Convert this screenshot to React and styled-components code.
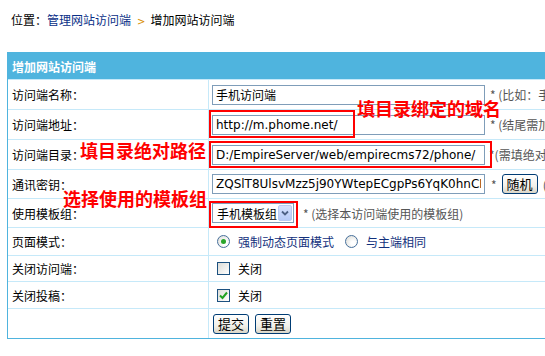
import React from 'react'
import styled, { createGlobalStyle } from 'styled-components'

const GlobalStyle = createGlobalStyle`
  html, body { margin: 0; padding: 0; background: #fff; overflow: hidden; }
  body {
    font-family: "Noto Sans CJK SC", "DejaVu Sans", sans-serif;
    font-size: 12px;
    color: #000;
  }
`

const Page = styled.div`
  position: relative;
  width: 545px;
  height: 356px;
  overflow: hidden;
`

const Crumbs = styled.div`
  box-sizing: border-box;
  height: 52px;
  padding: 13px 0 0 11px;
  line-height: 14px;
  white-space: nowrap;
`

const CrumbLink = styled.span`
  color: #0a2f87;
`

const CrumbArrow = styled.span`
  display: inline-block;
  margin: 0 5px 0 6px;
  color: #d98e00;
  font-family: "DejaVu Sans", sans-serif;
  font-size: 10px;
`

const Table = styled.div`
  margin-left: 7px;
  width: 720px;
  border: 1px solid #4fb4de;
  background: #c6e9f9;
  display: flex;
  flex-direction: column;
  gap: 1px;
`

const Header = styled.div`
  height: 26px;
  background: #4fb4de;
  color: #fff;
  font-weight: bold;
  padding-left: 4px;
  display: flex;
  align-items: center;
`

const Row = styled.div`
  display: grid;
  grid-template-columns: 200px 1fr;
  gap: 1px;
  height: ${p => p.h}px;
`

const Label = styled.div`
  background: #fff;
  padding-left: 4px;
  display: flex;
  align-items: center;
`

const Value = styled.div`
  background: #fff;
  padding-left: ${p => (p.inset ? 8 : 3)}px;
  display: flex;
  align-items: center;
  white-space: nowrap;
`

const Input = styled.input`
  box-sizing: border-box;
  width: 273px;
  height: 20px;
  margin: 0;
  padding: 0 3px;
  border: 1px solid #7f9db9;
  font-family: "DejaVu Sans", "Noto Sans CJK SC", sans-serif;
  font-size: 12px;
  color: #000;
  outline: none;
  background: #fff;
`

const Hint = styled.span`
  margin-left: ${p => p.gap ?? 5}px;
  color: #555;
`

const Button = styled.button`
  box-sizing: border-box;
  height: 20px;
  padding: 0 4px;
  margin: 0 ${p => p.mr ?? 0}px 0 ${p => p.ml ?? 0}px;
  border: 1px solid #003c74;
  border-radius: 3px;
  background: linear-gradient(#ffffff, #f2f1ea 60%, #d9d6c8);
  font-family: "Noto Sans CJK SC", sans-serif;
  font-size: 13px;
  line-height: 16px;
  color: #000;
`

const Select = styled.div`
  box-sizing: border-box;
  width: 82px;
  height: 20px;
  border: 1px solid #7f9db9;
  display: flex;
  align-items: center;
  justify-content: space-between;
  padding: 0 1px 0 4px;
  background: #fff;
`

const SelectArrow = styled.span`
  box-sizing: border-box;
  width: 14px;
  height: 16px;
  border: 1px solid #b8cbf3;
  border-radius: 2px;
  background: linear-gradient(#d6e2fd, #b7cbf7);
  display: flex;
  align-items: center;
  justify-content: center;
`

const Radio = styled.span`
  box-sizing: border-box;
  width: 13px;
  height: 13px;
  border-radius: 50%;
  border: 1px solid #47709c;
  background: radial-gradient(circle at 65% 65%, #fff 20%, #d8d8d2);
  display: inline-flex;
  align-items: center;
  justify-content: center;
  &::after {
    content: '';
    width: 5px;
    height: 5px;
    border-radius: 50%;
    background: ${p => (p.checked ? '#2aa52a' : 'transparent')};
  }
`

const Check = styled.span`
  box-sizing: border-box;
  width: 13px;
  height: 13px;
  border: 1px solid #1c5180;
  background: linear-gradient(135deg, #dcdcd7, #fff);
  display: inline-flex;
  align-items: center;
  justify-content: center;
`

const Option = styled.span`
  display: inline-flex;
  align-items: center;
  gap: 8px;
  margin-right: 11px;
  color: ${p => p.color || '#000'};
`

const Note = styled.div`
  position: absolute;
  left: ${p => p.x}px;
  top: ${p => p.y}px;
  color: #f00;
  font-size: 18px;
  font-weight: bold;
  line-height: 18px;
  white-space: nowrap;
`

const Frame = styled.div`
  position: absolute;
  box-sizing: border-box;
  left: ${p => p.x}px;
  top: ${p => p.y}px;
  width: ${p => p.w}px;
  height: ${p => p.h}px;
  border: 2px solid #f00;
  pointer-events: none;
`

const Chevron = () => (
  <svg width="8" height="6" viewBox="0 0 8 6">
    <path d="M1 1.5 L4 4.5 L7 1.5" fill="none" stroke="#4d6185" strokeWidth="1.8" />
  </svg>
)

const Tick = () => (
  <svg width="9" height="9" viewBox="0 0 9 9">
    <path d="M1 4.5 L3.5 7 L8 1.5" fill="none" stroke="#21a121" strokeWidth="2" />
  </svg>
)

export default function App() {
  return (
    <Page>
      <GlobalStyle />
      <Crumbs>
        位置：<CrumbLink>管理网站访问端</CrumbLink>
        <CrumbArrow>&gt;</CrumbArrow>增加网站访问端
      </Crumbs>
      <Table>
        <Header>增加网站访问端</Header>
        <Row h={29}>
          <Label>访问端名称：</Label>
          <Value>
            <Input defaultValue="手机访问端" />
            <Hint>* (比如：手机访问端)</Hint>
          </Value>
        </Row>
        <Row h={29}>
          <Label>访问端地址：</Label>
          <Value>
            <Input defaultValue="http://m.phome.net/" />
            <Hint>* (结尾需加“/”，比如：http://m.phome.net/)</Hint>
          </Value>
        </Row>
        <Row h={29}>
          <Label>访问端目录：</Label>
          <Value>
            <Input defaultValue="D:/EmpireServer/web/empirecms72/phone/" />
            <Hint gap={4}>*(需填绝对地址，结尾需加“/”)</Hint>
          </Value>
        </Row>
        <Row h={28}>
          <Label>通讯密钥：</Label>
          <Value>
            <Input defaultValue="ZQSlT8UlsvMzz5j90YWtepECgpPs6YqK0hnCFW0c" />
            <Hint gap={6}>*</Hint>
            <Button ml={5} mr={5}>随机</Button>
            <Hint gap={0}>(密钥不少于32个字符)</Hint>
          </Value>
        </Row>
        <Row h={28}>
          <Label>使用模板组：</Label>
          <Value>
            <Select>
              <span>手机模板组</span>
              <SelectArrow>
                <Chevron />
              </SelectArrow>
            </Select>
            <Hint gap={9}>* (选择本访问端使用的模板组)</Hint>
          </Value>
        </Row>
        <Row h={27}>
          <Label>页面模式：</Label>
          <Value inset>
            <Option color="#12307c">
              <Radio checked />
              强制动态页面模式
            </Option>
            <Option color="#12307c">
              <Radio />
              与主端相同
            </Option>
          </Value>
        </Row>
        <Row h={25}>
          <Label>关闭访问端：</Label>
          <Value inset>
            <Option>
              <Check />
              关闭
            </Option>
          </Value>
        </Row>
        <Row h={26}>
          <Label>关闭投稿：</Label>
          <Value inset>
            <Option>
              <Check>
                <Tick />
              </Check>
              关闭
            </Option>
          </Value>
        </Row>
        <Row h={29}>
          <Label />
          <Value inset={false}>
            <Button ml={1} mr={6}>提交</Button>
            <Button>重置</Button>
          </Value>
        </Row>
      </Table>

      <Frame x={209} y={110} w={146} h={28} />
      <Frame x={209} y={141} w={283} h={27} />
      <Frame x={209} y={201} w={89} h={27} />
      <Note x={357} y={99}>填目录绑定的域名</Note>
      <Note x={80} y={141}>填目录绝对路径</Note>
      <Note x={63} y={189}>选择使用的模板组</Note>
    </Page>
  )
}
